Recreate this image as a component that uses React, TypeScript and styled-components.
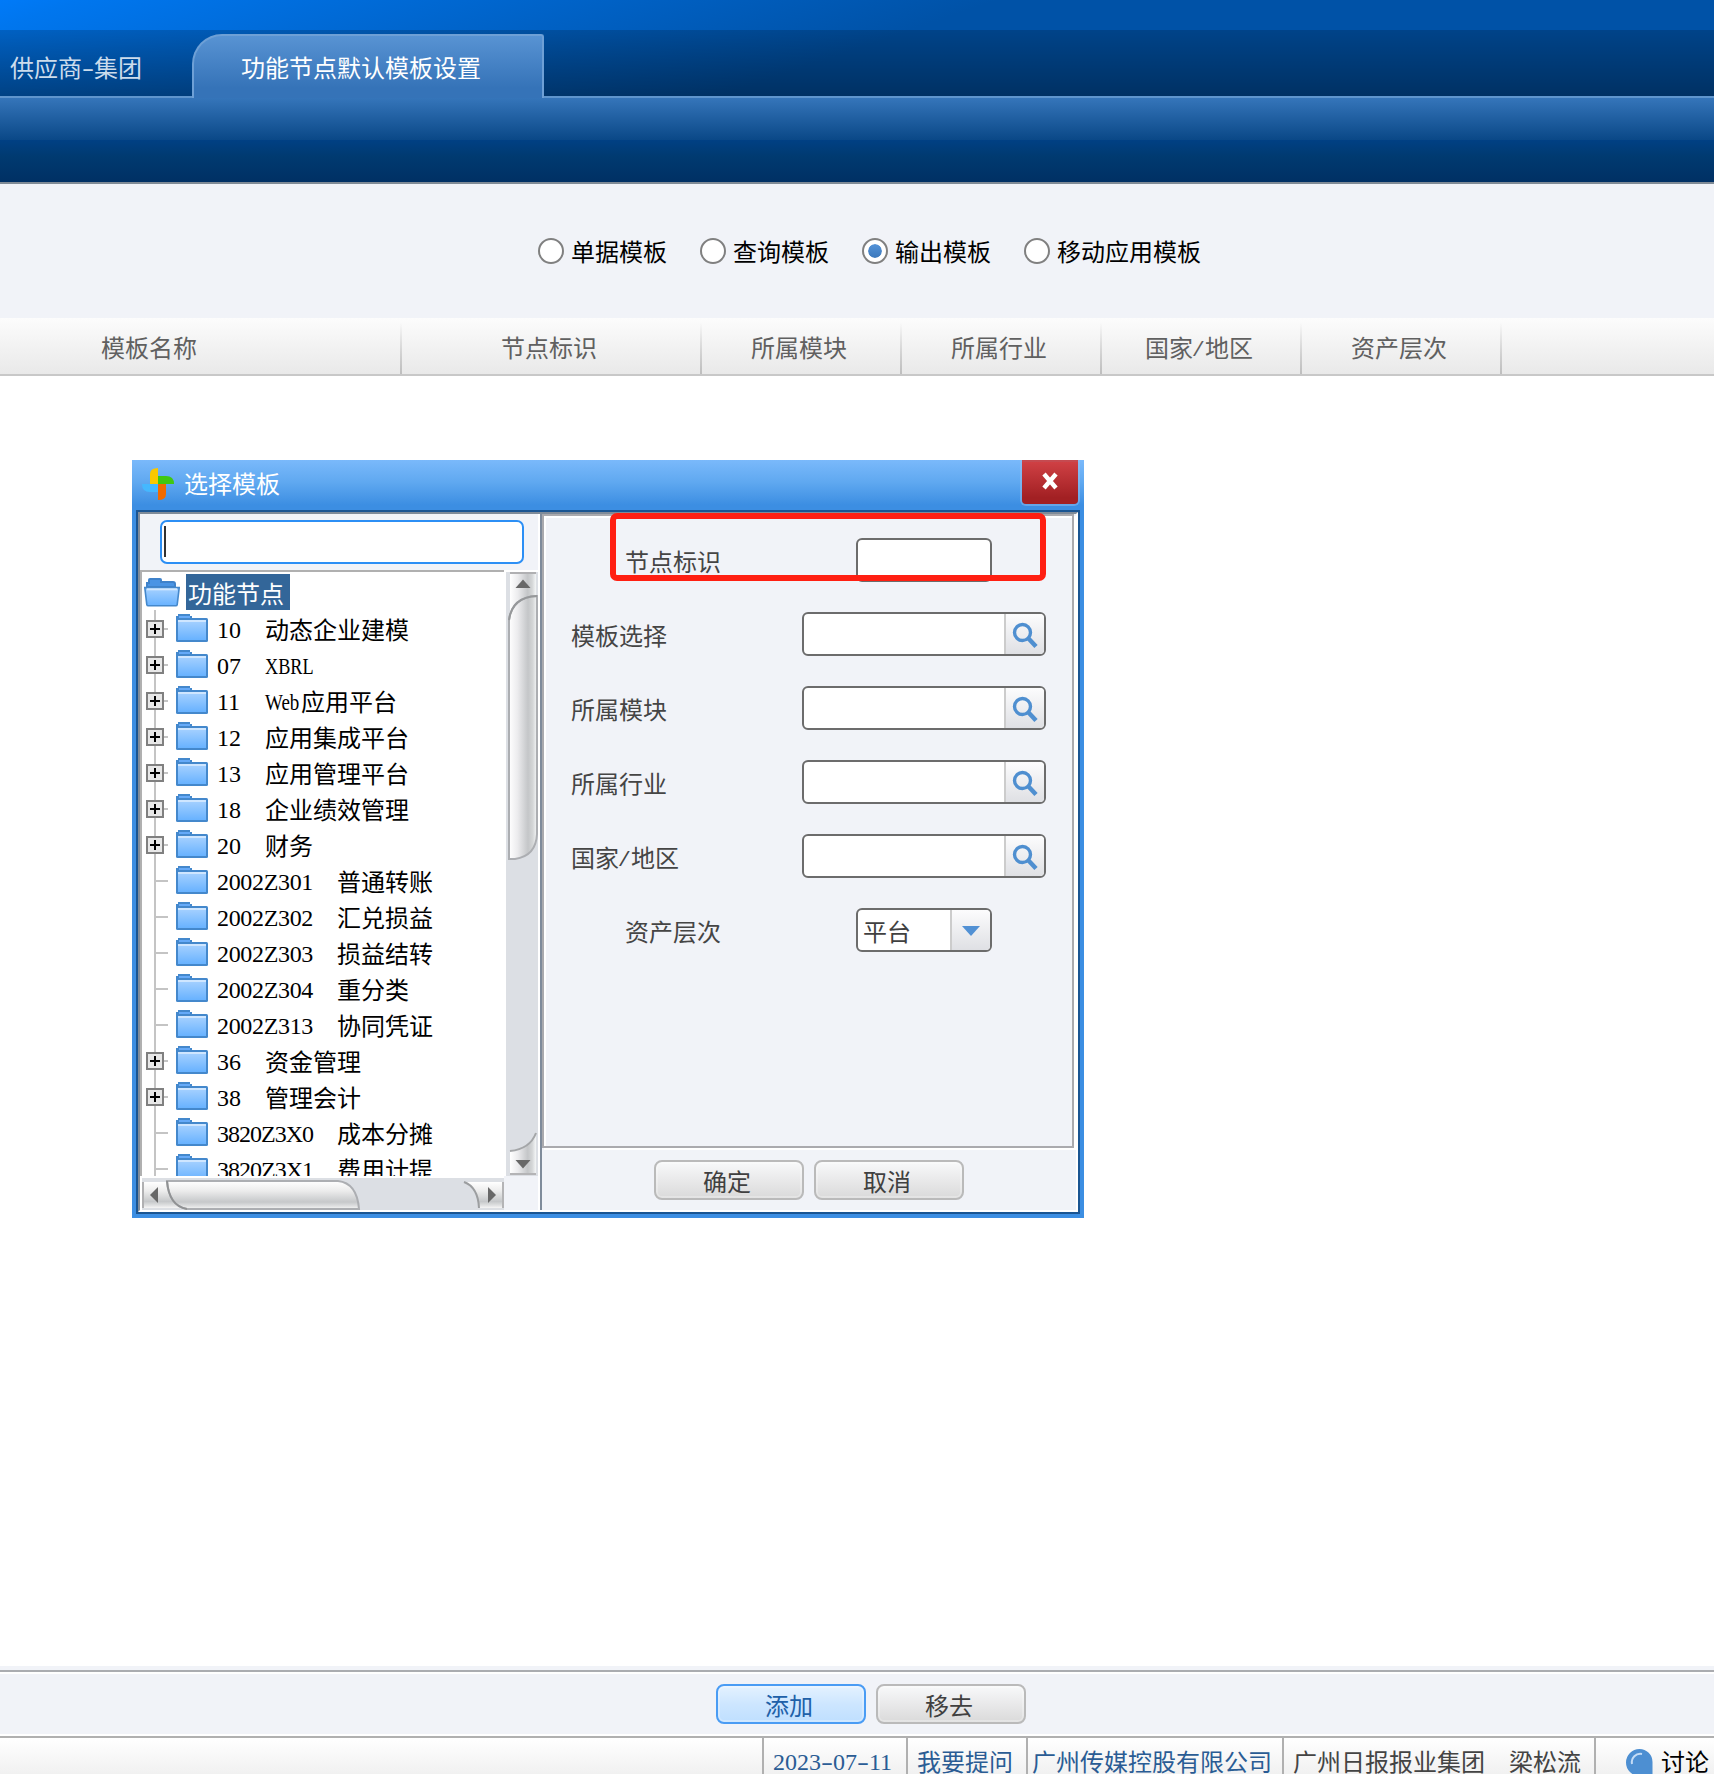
import React from 'react';
import styled, { createGlobalStyle } from 'styled-components';

const Global = createGlobalStyle`
  * { box-sizing: border-box; }
  html, body { margin: 0; padding: 0; background: #fff; }
  body {
    font-family: "Noto Sans CJK SC", "Liberation Sans", sans-serif;
    font-size: 24px;
    line-height: 24px;
    overflow: hidden;
  }
  svg { display: block; flex: none; }
`;

const Page = styled.div`
  display: flex;
  flex-direction: column;
  width: 1714px;
  height: 1774px;
  overflow: hidden;
  white-space: pre;
`;

/* Half-width characters sit on a 12px grid next to the 24px ideographs. */
const Latin = styled.span<{ $w?: number; $sx?: number; $ls?: number }>`
  display: inline-block;
  width: ${p => (p.$w ? `${p.$w}px` : 'auto')};
  font-family: "Liberation Serif", serif;
  letter-spacing: ${p => p.$ls ?? 0}px;
  transform: translateY(-1px) scaleX(${p => p.$sx ?? 1});
  transform-origin: left center;
`;

const Hyphen = () => <Latin $w={12} $sx={1.5}>-</Latin>;
const Slash = () => <Latin $w={12} $sx={1.6}>/</Latin>;

/* ---------- header ---------- */
const Header = styled.header`
  flex: none;
  height: 98px;
  padding-top: 30px;
  background: linear-gradient(161deg, #007af8 0, #0076ee 26px, #0052a7 325px);
`;

const TabBar = styled.nav`
  display: flex;
  height: 68px;
  padding-top: 4px;
  background: linear-gradient(rgba(0, 0, 0, 0.18), rgba(0, 0, 0, 0.41));
  box-shadow: inset 0 -2px #5f95cd;
`;

const Tab = styled.div<{ $active?: boolean }>`
  width: ${p => (p.$active ? 352 : 192)}px;
  padding: 20px 0 0 ${p => (p.$active ? 47 : 10)}px;
  color: ${p => (p.$active ? '#fff' : '#ccdcec')};
  border: ${p => (p.$active ? '2px solid #6ea0d6' : '0 solid transparent')};
  border-bottom: 0;
  border-radius: ${p => (p.$active ? '30px 3px 0 0' : '0')};
  background: ${p => (p.$active ? 'linear-gradient(#5893d3, #3573b8 84%)' : 'none')};
  line-height: ${p => (p.$active ? 22 : 26)}px;
`;

const ToolBand = styled.div`
  flex: none;
  height: 42px;
  background: linear-gradient(#3575ba, #0a4887);
`;

const DarkBand = styled.div`
  flex: none;
  height: 44px;
  background: linear-gradient(#004084, #003a70 40%, #003064);
  border-bottom: 2px solid #808b96;
`;

/* ---------- template type ---------- */
const RadioRow = styled.div`
  flex: none;
  display: flex;
  gap: 33px;
  height: 134px;
  padding: 54px 0 0 538px;
  background: #f1f3f8;
`;

const Radio = styled.label`
  display: flex;
  align-items: center;
  gap: 7px;
  height: 26px;
  color: #000;
`;

const Dot = styled.i<{ $on?: boolean }>`
  width: 26px;
  height: 26px;
  border-radius: 50%;
  border: 2px solid #808080;
  background: ${p => (p.$on ? 'linear-gradient(#5b9be0, #3470b4)' : '#fff')};
  background-clip: content-box;
  padding: ${p => (p.$on ? 4 : 0)}px;
  box-shadow: inset 0 0 0 4px #fff;
  background-color: ${p => (p.$on ? 'transparent' : '#fff')};
`;

/* ---------- grid header ---------- */
const GridHead = styled.div`
  flex: none;
  display: flex;
  height: 58px;
  background: linear-gradient(#fcfcfc, #e9e9e9);
  border-bottom: 2px solid #c8c8c8;
`;

const HeadCell = styled.div<{ $w: number; $pull?: number }>`
  flex: none;
  width: ${p => p.$w}px;
  margin-left: ${p => -(p.$pull ?? 0)}px;
  display: flex;
  justify-content: center;
  padding: 17px ${p => (p.$pull ? 0 : 6)}px 0 0;
  color: #606060;
  background: linear-gradient(rgba(190, 190, 190, 0) 8%, #bebebe) right / 2px 100% no-repeat;
`;

const Workspace = styled.main`
  position: relative;
  flex: none;
  height: 1290px;
  background: #fff;
`;

/* ---------- dialog ---------- */
const Dialog = styled.section`
  position: absolute;
  left: 132px;
  top: 84px;
  width: 952px;
  height: 758px;
  display: flex;
  flex-direction: column;
  background: #3c8ee2;
`;

const TitleBar = styled.div`
  flex: none;
  display: flex;
  height: 50px;
  padding: 0 6px 0 10px;
  color: #fff;
  background: linear-gradient(#7ab9fb, #5fa8f0 45%, #3c8ee2 90%);
  overflow: hidden;
`;

const Title = styled.span`
  flex: 1;
  padding: 11px 0 0 10px;
`;

const CloseButton = styled.button`
  width: 56px;
  height: 44px;
  padding: 0;
  display: flex;
  align-items: flex-start;
  justify-content: center;
  border: 0;
  border-top: 2px solid #c54a50;
  padding-top: 10px;
  border-radius: 0 0 4px 4px;
  background: linear-gradient(#cf4044, #a22023 85%);
  box-shadow: 0 0 0 2px rgba(150, 195, 240, 0.45);
`;

const DialogBody = styled.div`
  flex: 1;
  margin: 0 4px 4px;
  border: 2px solid #1a5592;
  display: flex;
`;

const Frame = styled.div`
  flex: 1;
  display: flex;
  border: 2px solid #7f8b99;
  border-right-color: #fff;
  border-bottom-color: #fff;
  background: #f1f3f8;
`;

const TreePane = styled.div`
  flex: none;
  width: 402px;
  display: flex;
  flex-direction: column;
  border-right: 2px solid #7f8b9b;
  box-shadow: inset -2px 0 #fff;
`;

const SearchBox = styled.div`
  flex: none;
  width: 364px;
  height: 44px;
  margin: 6px 0 6px 20px;
  padding: 4px 2px;
  background: #fff;
  border: 2px solid #2c8ff5;
  border-radius: 7px;
`;

const Caret = styled.i`
  display: block;
  width: 2px;
  height: 31px;
  background: #333;
`;

const TreeArea = styled.div`
  display: flex;
  height: 606px;
  width: 398px;
  background: #fff;
`;

const Tree = styled.div`
  width: 364px;
  height: 606px;
  margin-right: 2px;
  overflow: hidden;
  border-top: 2px solid #b0b0b0;
  border-left: 2px solid #b0b0b0;
  background: #fff;
`;

const RootRow = styled.div`
  display: flex;
  height: 38px;
  padding: 2px 0 0 2px;
`;

const RootLabel = styled.span`
  width: 104px;
  height: 36px;
  margin-left: 6px;
  padding: 7px 0 0 2px;
  color: #fff;
  background: #336699;
`;

const Row = styled.div`
  display: flex;
  height: 36px;
  color: #000;
`;

const RowCode = styled.span`
  padding: 7px 0 0 9px;
`;

const RowName = styled.span`
  padding: 7px 0 0 24px;
`;

const HBarRow = styled.div`
  width: 364px;
  padding: 2px 0 0 2px;
  background: #fff;
`;

const MainPane = styled.div`
  flex: 1;
  display: flex;
  flex-direction: column;
`;

const FormPane = styled.div`
  flex: none;
  position: relative;
  width: 532px;
  height: 634px;
  border: 2px solid #aaaaae;
  box-shadow: inset 2px 2px #fff, 2px 2px #fff;
  padding: 22px 0 0 26px;
  display: flex;
  flex-direction: column;
  gap: 30px;
`;

const FieldRow = styled.div<{ $indent?: boolean }>`
  display: flex;
  height: 44px;
  padding-left: ${p => (p.$indent ? 54 : 0)}px;
`;

const FieldLabel = styled.span`
  width: 232px;
  padding: 11px 0 0 1px;
  color: #454545;
`;

const Field = styled.div<{ $w: number }>`
  display: flex;
  width: ${p => p.$w}px;
  height: 44px;
  border: 2px solid #6c6c6c;
  border-radius: 6px;
  background: #fff;
  overflow: hidden;
`;

const FieldText = styled.span`
  flex: 1;
  padding: 9px 0 0 5px;
  color: #404040;
`;

const FieldButton = styled.span`
  flex: none;
  width: 40px;
  padding: 1px 1px 0 0;
  display: flex;
  align-items: center;
  justify-content: center;
  border-left: 2px solid #ccc;
  background: linear-gradient(#fcfcfd, #dfe0e4);
`;

const Highlight = styled.i`
  position: absolute;
  left: 66px;
  top: -3px;
  width: 436px;
  height: 68px;
  border: 6px solid #ff1f12;
  border-radius: 7px;
`;

const ButtonRow = styled.div<{ $left: number; $top: number }>`
  display: flex;
  gap: 10px;
  padding: ${p => p.$top}px 0 0 ${p => p.$left}px;
`;

const Button = styled.button<{ $primary?: boolean }>`
  width: 150px;
  height: 40px;
  font: inherit;
  line-height: 24px;
  padding: 2px 4px 0 0;
  border-radius: 8px;
  border: 2px solid ${p => (p.$primary ? '#4a9cf4' : '#bababa')};
  color: ${p => (p.$primary ? '#2060a8' : '#404040')};
  background: ${p => (p.$primary
    ? 'linear-gradient(#e4f2ff, #cde6ff 50%, #bfdfff)'
    : 'linear-gradient(#f8f9fa, #e9e9ea 50%, #dadada)')};
  box-shadow: inset 0 0 0 2px rgba(255, 255, 255, 0.25);
`;

/* ---------- footer ---------- */
const ActionBar = styled.div`
  flex: none;
  height: 72px;
  padding-top: 4px;
  background: #f1f3f8;
  border-bottom: 2px solid #b0b0b0;
  box-shadow: inset 0 -2px #fff;
`;

const ActionRule = styled.div`
  height: 4px;
  background: #fff;
  border-top: 2px solid #aaacb0;
`;

const StatusBar = styled.footer`
  flex: 1;
  display: flex;
  padding-left: 762px;
  background: linear-gradient(#fff, #f0f0f0);
`;

const StatusCell = styled.div<{ $w: number; $pad: number; $color: string }>`
  flex: none;
  display: flex;
  width: ${p => p.$w}px;
  padding: 11px 0 0 ${p => p.$pad}px;
  border-left: 2px solid #b0b0b0;
  color: ${p => p.$color};
`;

const NameGap = styled.i`
  flex: none;
  width: 24px;
`;

const DiscussText = styled.span`
  margin-left: 8px;
  color: #000;
`;

/* ---------- drawings ---------- */
const FolderDefs = () => (
  <svg width="0" height="0" style={{ position: 'absolute' }}>
    <defs>
      <linearGradient id="folder" x1="0" y1="0" x2="0" y2="1">
        <stop offset="0" stopColor="#a8d2ff" />
        <stop offset="1" stopColor="#68b2ff" />
      </linearGradient>
      <linearGradient id="vbar" x1="0" y1="0" x2="1" y2="0">
        <stop offset="0" stopColor="#ffffff" />
        <stop offset="0.3" stopColor="#ececee" />
        <stop offset="0.68" stopColor="#c4c6c8" />
        <stop offset="0.85" stopColor="#d4d6d7" />
        <stop offset="1" stopColor="#f4f6f7" />
      </linearGradient>
      <linearGradient id="hbar" x1="0" y1="0" x2="0" y2="1">
        <stop offset="0" stopColor="#ffffff" />
        <stop offset="0.35" stopColor="#ececec" />
        <stop offset="0.75" stopColor="#c6c8ca" />
        <stop offset="0.9" stopColor="#e0e1e2" />
        <stop offset="1" stopColor="#f6f6f6" />
      </linearGradient>
    </defs>
  </svg>
);

const Branch = ({ expandable }: { expandable: boolean }) => (
  <svg width="34" height="36" viewBox="0 0 34 36" shapeRendering="crispEdges">
    <path d="M12 0h2v36h-2zM14 18h12v2H14z" fill="#c4c4c4" />
    {expandable && (
      <>
        <rect x="4" y="10" width="18" height="18" fill="#808080" />
        <rect x="6" y="12" width="14" height="14" fill="#e8e8e8" />
        <path d="M8 18h10v2H8zM12 14h2v10h-2z" fill="#000" />
      </>
    )}
  </svg>
);

const Folder = () => (
  <svg width="32" height="36" viewBox="0 0 32 36">
    <path d="M0 10V6h2V4h12v2h2v4z" fill="#4488cc" />
    <rect x="3" y="6" width="11" height="3" fill="#66aaf8" />
    <rect x="0" y="8" width="32" height="24" rx="1.5" fill="#4488cc" />
    <rect x="2" y="10" width="28" height="20" fill="url(#folder)" />
    <rect x="2" y="10" width="28" height="2" fill="#cfe6ff" />
  </svg>
);

const OpenFolder = () => (
  <svg width="36" height="36" viewBox="0 0 36 36">
    <path d="M3 13V9h2V6q0-1 1-1h10q1 0 1 1v2h12q2 0 2 2v3z" fill="#4a94e4" stroke="#3f82ca" strokeWidth="2" />
    <path d="M0.8 13.600h34.400l-2 17q-.2 1.200-1.400 1.200H4.400Q3 31.800 2.800 30.600z" fill="url(#folder)" stroke="#4488cc" strokeWidth="1.6" />
    <path d="M3 15.300h30" stroke="#d2e8ff" strokeWidth="2" />
  </svg>
);

const Pinwheel = () => (
  <svg width="32" height="50" viewBox="0 0 32 50">
    <path d="M8 24V14q0-6 8-6v16z" fill="#fac800" />
    <path d="M16 24v-8h8q8 0 8 8z" fill="#40c810" />
    <path d="M16 24h8v10q0 6-8 6z" fill="#f06a00" />
    <path d="M16 24v8H8q-8 0-8-8z" fill="#44b8ff" />
  </svg>
);

const Cross = () => (
  <svg width="16" height="18" viewBox="0 0 16 18">
    <path d="M2 2l12 14M14 2L2 16" stroke="#fff" strokeWidth="4.400" />
  </svg>
);

const Magnifier = () => (
  <svg width="26" height="26" viewBox="0 0 26 26" fill="none" stroke="#4f8fd0">
    <circle cx="10.5" cy="10.5" r="8" strokeWidth="3.4" />
    <path d="M16.5 16.5l7.5 8" strokeWidth="4.4" />
  </svg>
);

const VScroll = () => (
  <svg width="32" height="606" viewBox="0 0 32 606">
    <rect y="2" width="32" height="604" fill="#dcdfe4" />
    <rect x="4" y="4" width="26" height="44" fill="url(#vbar)" />
    <rect x="4" y="2" width="26" height="2" fill="#b0b0b2" />
    <path d="M17 9.5l7.5 8.5H9.5z" fill="#686868" />
    <path d="M3 288V50Q6 27 31 26V264Q30 286 9 289H3z" fill="url(#vbar)" stroke="#acaeb2" strokeWidth="2" />
    <path d="M3 50Q6 27 31 26" fill="none" stroke="#96989a" strokeWidth="2" />
    <path d="M4 581Q24 579 30 563V604H4z" fill="url(#vbar)" />
    <path d="M4 581Q24 579 30 563" fill="none" stroke="#a4a6a8" strokeWidth="2" />
    <rect x="4" y="603" width="26" height="2" fill="#b4b4b6" />
    <path d="M17 598.500l7.500-8.500H9.500z" fill="#686868" />
  </svg>
);

const HScroll = () => (
  <svg width="362" height="32" viewBox="0 0 362 32">
    <rect width="362" height="32" fill="#dcdfe4" />
    <rect x="0" y="4" width="50" height="26" fill="url(#hbar)" />
    <rect x="0" y="4" width="2" height="26" fill="#b0b0b2" />
    <path d="M8 17l8-8v16z" fill="#686868" />
    <path d="M25 3H196Q215 5 217 31H45Q27 28 25 3z" fill="url(#hbar)" stroke="#acaeb2" strokeWidth="2" />
    <path d="M25 3Q27 28 45 31" fill="none" stroke="#909294" strokeWidth="2" />
    <path d="M322 4Q336 9 337 30H361V4z" fill="url(#hbar)" />
    <path d="M322 4Q336 9 337 30" fill="none" stroke="#9c9ea0" strokeWidth="2" />
    <rect x="360" y="4" width="2" height="26" fill="#b4b4b6" />
    <path d="M354 17l-8-8v16z" fill="#686868" />
  </svg>
);

const Bubble = () => (
  <svg width="27" height="27" viewBox="0 0 27 27">
    <path d="M13.500 0a13 13 0 0 1 13 13v14H13.500a13 13 0 0 1 0-27z" fill="#4d8fd2" />
    <path d="M6 15A8.500 8.500 0 0 1 16 5" fill="none" stroke="#c4dcf6" strokeWidth="2" />
  </svg>
);

/* ---------- data ---------- */
type Node = { code: string; name: React.ReactNode; open?: boolean };
const nodes: Node[] = [
  { code: '10', name: '动态企业建模', open: true },
  { code: '07', name: <Latin $w={48} $sx={0.76}>XBRL</Latin>, open: true },
  { code: '11', name: <><Latin $w={36} $sx={0.79}>Web</Latin>应用平台</>, open: true },
  { code: '12', name: '应用集成平台', open: true },
  { code: '13', name: '应用管理平台', open: true },
  { code: '18', name: '企业绩效管理', open: true },
  { code: '20', name: '财务', open: true },
  { code: '2002Z301', name: '普通转账' },
  { code: '2002Z302', name: '汇兑损益' },
  { code: '2002Z303', name: '损益结转' },
  { code: '2002Z304', name: '重分类' },
  { code: '2002Z313', name: '协同凭证' },
  { code: '36', name: '资金管理', open: true },
  { code: '38', name: '管理会计', open: true },
  { code: '3820Z3X0', name: '成本分摊' },
  { code: '3820Z3X1', name: '费用计提' },
];

const lookups: React.ReactNode[] = ['模板选择', '所属模块', '所属行业', <>国家<Slash />地区</>];

export default function App() {
  return (
    <>
      <Global />
      <FolderDefs />
      <Page>
        <Header>
          <TabBar>
            <Tab>供应商<Hyphen />集团</Tab>
            <Tab $active>功能节点默认模板设置</Tab>
          </TabBar>
        </Header>
        <ToolBand />
        <DarkBand />
        <RadioRow>
          {['单据模板', '查询模板', '输出模板', '移动应用模板'].map((t, i) => (
            <Radio key={t}><Dot $on={i === 2} />{t}</Radio>
          ))}
        </RadioRow>
        <GridHead>
          <HeadCell $w={506} $pull={104}>模板名称</HeadCell>
          <HeadCell $w={300}>节点标识</HeadCell>
          <HeadCell $w={200}>所属模块</HeadCell>
          <HeadCell $w={200}>所属行业</HeadCell>
          <HeadCell $w={200}><span>国家<Slash />地区</span></HeadCell>
          <HeadCell $w={200}>资产层次</HeadCell>
        </GridHead>
        <Workspace>
          <Dialog>
            <TitleBar>
              <Pinwheel />
              <Title>选择模板</Title>
              <CloseButton><Cross /></CloseButton>
            </TitleBar>
            <DialogBody>
              <Frame>
                <TreePane>
                  <SearchBox><Caret /></SearchBox>
                  <TreeArea>
                    <Tree>
                      <RootRow><OpenFolder /><RootLabel>功能节点</RootLabel></RootRow>
                      {nodes.map(n => (
                        <Row key={n.code}>
                          <Branch expandable={!!n.open} />
                          <Folder />
                          <RowCode>
                            <Latin $w={n.code.length * 12} $ls={n.code.includes('X') ? -1 : n.code.includes('Z') ? -0.33 : 0}>{n.code}</Latin>
                          </RowCode>
                          <RowName>{n.name}</RowName>
                        </Row>
                      ))}
                    </Tree>
                    <VScroll />
                  </TreeArea>
                  <HBarRow><HScroll /></HBarRow>
                </TreePane>
                <MainPane>
                  <FormPane>
                    <FieldRow $indent>
                      <FieldLabel>节点标识</FieldLabel>
                      <Field $w={136} />
                    </FieldRow>
                    {lookups.map((l, i) => (
                      <FieldRow key={i}>
                        <FieldLabel>{l}</FieldLabel>
                        <Field $w={244}>
                          <FieldText />
                          <FieldButton><Magnifier /></FieldButton>
                        </Field>
                      </FieldRow>
                    ))}
                    <FieldRow $indent>
                      <FieldLabel>资产层次</FieldLabel>
                      <Field $w={136}>
                        <FieldText>平台</FieldText>
                        <FieldButton>
                          <svg width="18" height="10" viewBox="0 0 18 10"><path d="M0 0h18L9 10z" fill="#5291d4" /></svg>
                        </FieldButton>
                      </Field>
                    </FieldRow>
                    <Highlight />
                  </FormPane>
                  <ButtonRow $left={112} $top={12}>
                    <Button>确定</Button>
                    <Button>取消</Button>
                  </ButtonRow>
                </MainPane>
              </Frame>
            </DialogBody>
          </Dialog>
        </Workspace>
        <ActionBar>
          <ActionRule />
          <ButtonRow $left={716} $top={10}>
            <Button $primary>添加</Button>
            <Button>移去</Button>
          </ButtonRow>
        </ActionBar>
        <StatusBar>
          <StatusCell $w={144} $pad={9} $color="#2a5c94">
            <span><Latin>2023</Latin><Hyphen /><Latin>07</Latin><Hyphen /><Latin>11</Latin></span>
          </StatusCell>
          <StatusCell $w={120} $pad={9} $color="#2a5c94">我要提问</StatusCell>
          <StatusCell $w={256} $pad={4} $color="#2a5c94">广州传媒控股有限公司</StatusCell>
          <StatusCell $w={312} $pad={9} $color="#444">广州日报报业集团<NameGap />梁松流</StatusCell>
          <StatusCell $w={120} $pad={30} $color="#000">
            <Bubble />
            <DiscussText>讨论</DiscussText>
          </StatusCell>
        </StatusBar>
      </Page>
    </>
  );
}
